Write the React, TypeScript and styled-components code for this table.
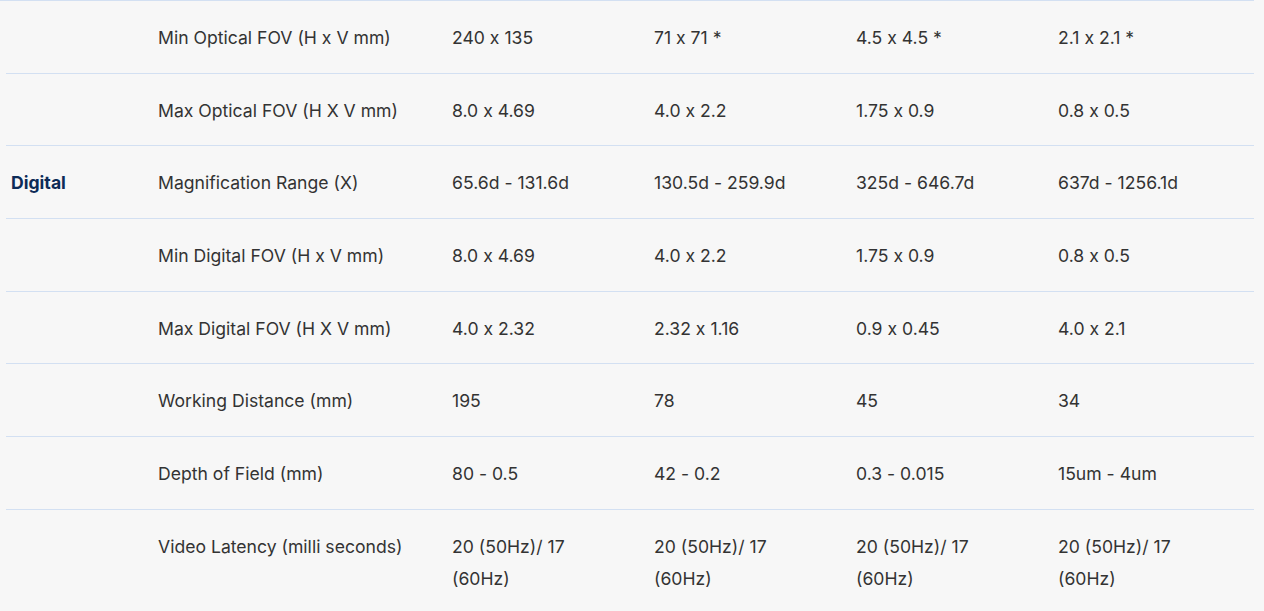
import React from "react";
import styled, { createGlobalStyle } from "styled-components";

const Global = createGlobalStyle`
  html, body { margin: 0; padding: 0; background: #f7f7f7; }
  body { font-family: Inter, "Noto Sans", sans-serif; color: #333; }
`;

const Page = styled.div`
  width: 1264px;
  height: 611px;
  overflow: hidden;
  background: #f7f7f7;
`;

const Spec = styled.div`
  width: 1254px;
  border-top: 1px solid #d3e0f2;
`;

const Row = styled.div`
  margin-left: 6px;
  width: 1248px;
  display: grid;
  grid-template-columns: 147px 294px repeat(3, 202px) 201px;
  border-bottom: 1px solid #d3e0f2;
`;

const Cell = styled.div`
  padding: 21px 40px 19px 5px;
  font-size: 17.6px;
  line-height: 31.68px;
  color: #333;
  align-self: start;
  font-feature-settings: "calt" 0;
`;

const GroupCell = styled(Cell)`
  align-self: center;
  font-weight: 700;
  color: #0d2b57;
  padding-right: 10px;
`;

const LabelCell = styled(Cell)`
  padding-right: 15px;
  white-space: nowrap;
`;

const rows: [string, string, string[]][] = [
  ["", "Min Optical FOV (H x V mm)", ["240 x 135", "71 x 71 *", "4.5 x 4.5 *", "2.1 x 2.1 *"]],
  ["", "Max Optical FOV (H X V mm)", ["8.0 x 4.69", "4.0 x 2.2", "1.75 x 0.9", "0.8 x 0.5"]],
  ["Digital", "Magnification Range (X)", ["65.6d - 131.6d", "130.5d - 259.9d", "325d - 646.7d", "637d - 1256.1d"]],
  ["", "Min Digital FOV (H x V mm)", ["8.0 x 4.69", "4.0 x 2.2", "1.75 x 0.9", "0.8 x 0.5"]],
  ["", "Max Digital FOV (H X V mm)", ["4.0 x 2.32", "2.32 x 1.16", "0.9 x 0.45", "4.0 x 2.1"]],
  ["", "Working Distance (mm)", ["195", "78", "45", "34"]],
  ["", "Depth of Field (mm)", ["80 - 0.5", "42 - 0.2", "0.3 - 0.015", "15um - 4um"]],
  ["", "Video Latency (milli seconds)", ["20 (50Hz)/ 17 (60Hz)", "20 (50Hz)/ 17 (60Hz)", "20 (50Hz)/ 17 (60Hz)", "20 (50Hz)/ 17 (60Hz)"]],
];

export default function App() {
  return (
    <Page>
      <Global />
      <Spec>
        {rows.map(([h, label, vals], i) => (
          <Row key={i}>
            <GroupCell>{h}</GroupCell>
            <LabelCell>{label}</LabelCell>
            {vals.map((v, j) => (
              <Cell key={j}>{v}</Cell>
            ))}
          </Row>
        ))}
      </Spec>
    </Page>
  );
}
